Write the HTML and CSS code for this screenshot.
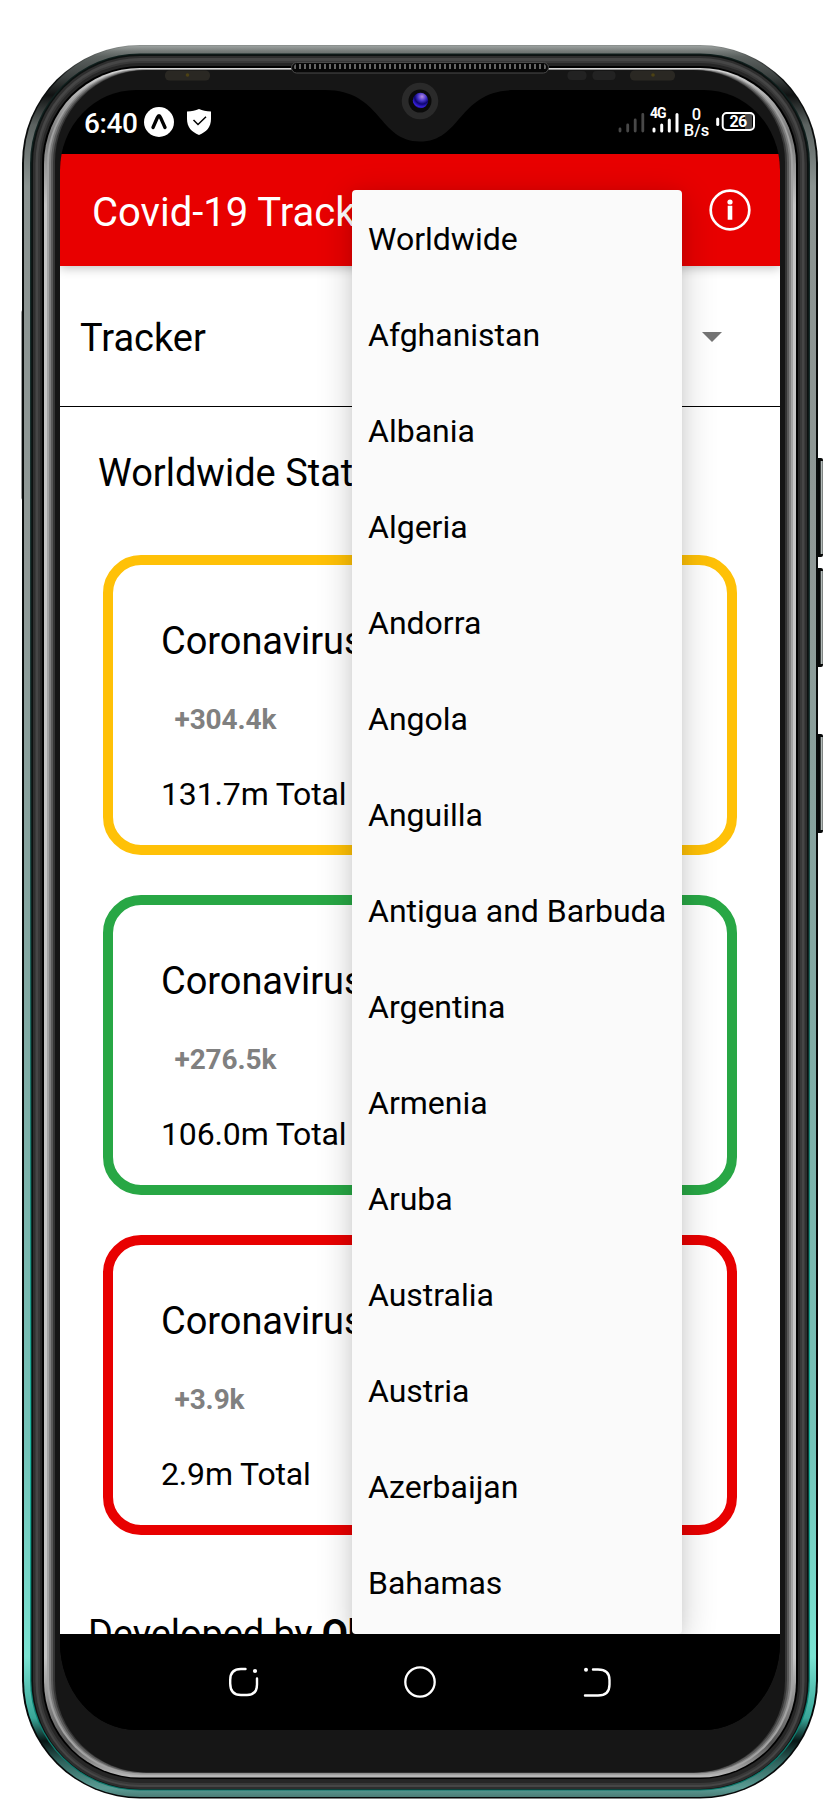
FILE: index.html
```html
<!DOCTYPE html>
<html lang="en">
<head>
<meta charset="utf-8">
<title>Covid-19 Tracker</title>
<link rel="stylesheet" href="styles.css">
</head>
<body>
<div class="phone">
  <svg class="frame" width="840" height="1820" viewBox="0 0 840 1820">
    <defs>
      <linearGradient id="edge" x1="0" y1="0" x2="0" y2="1">
        <stop offset="0" stop-color="#8f9492"/><stop offset=".006" stop-color="#555a58"/><stop offset=".02" stop-color="#0a0c0c"/><stop offset="1" stop-color="#050808"/>
      </linearGradient>
      <linearGradient id="metal" gradientUnits="userSpaceOnUse" x1="0" y1="46" x2="0" y2="1797">
        <stop offset="0" stop-color="#9aa09e"/><stop offset=".003" stop-color="#757a78"/><stop offset=".006" stop-color="#5c6260"/><stop offset=".018" stop-color="#3a3f3e"/><stop offset=".028" stop-color="#101212"/><stop offset=".045" stop-color="#5b6260"/><stop offset=".08" stop-color="#8b9391"/><stop offset=".3" stop-color="#909997"/><stop offset=".55" stop-color="#82aaa4"/><stop offset=".8" stop-color="#74c4b9"/><stop offset=".92" stop-color="#7ae3d2"/><stop offset=".955" stop-color="#38a597"/><stop offset=".968" stop-color="#081716"/><stop offset=".98" stop-color="#2f635d"/><stop offset=".995" stop-color="#5a9c94"/><stop offset="1" stop-color="#4a7c76"/>
      </linearGradient>
      <linearGradient id="tint" x1="0" y1="0" x2="0" y2="1">
        <stop offset="0" stop-color="#10201e"/><stop offset=".4" stop-color="#1d3a37"/><stop offset=".8" stop-color="#18b8a2"/><stop offset="1" stop-color="#0b7468"/>
      </linearGradient>
      <linearGradient id="shine" x1="0" y1="0" x2="0" y2="1">
        <stop offset="0" stop-color="#d5d5d5"/><stop offset=".04" stop-color="#777"/><stop offset=".08" stop-color="#c4c4c4"/><stop offset=".93" stop-color="#c4c4c4"/><stop offset=".98" stop-color="#555"/><stop offset="1" stop-color="#bbb"/>
      </linearGradient>
      <radialGradient id="lens" cx=".6" cy=".25" r=".8">
        <stop offset="0" stop-color="#b58be0"/><stop offset=".35" stop-color="#4432c8"/><stop offset=".6" stop-color="#0d0570"/><stop offset=".85" stop-color="#3a22e0"/><stop offset="1" stop-color="#100830"/>
      </radialGradient>
      <pattern id="mesh" width="5" height="8" patternUnits="userSpaceOnUse" x="294" y="63">
        <rect width="5" height="8" fill="#050505"/><rect x="0" width="2" height="6" fill="#666"/>
      </pattern>
    </defs>
    <!-- side buttons -->
    <g fill="#070909">
      <rect x="814" y="458" width="9" height="99" rx="2"/><rect x="814" y="568" width="9" height="99" rx="2"/><rect x="814" y="734" width="9" height="99" rx="2"/>
      <rect x="21.3" y="310" width="4" height="190" rx="2" fill="#777"/>
    </g>
    <g fill="#b4bcba">
      <rect x="820.7" y="461" width="2" height="93"/><rect x="820.7" y="571" width="2" height="93"/><rect x="820.7" y="737" width="2" height="93"/>
    </g>
    <!-- metal body, outside in -->
    <rect x="22" y="45" width="796" height="1753.5" rx="118" fill="url(#edge)"/>
    <rect x="24" y="46" width="792" height="1751" rx="116" fill="url(#metal)"/>
    <rect x="30" y="53.5" width="780" height="1737" rx="110" fill="url(#tint)"/>
    <rect x="31.3" y="54.5" width="777.4" height="1735" rx="109" fill="#0c1110"/>
    <rect x="33" y="56" width="774" height="1733" rx="107" fill="#2e2e2e"/>
    <rect x="35.5" y="58" width="769" height="1729" rx="105" fill="#464646"/>
    <rect x="38" y="61" width="764" height="1724" rx="102" fill="#383838"/>
    <rect x="40" y="63" width="760" height="1720" rx="100" fill="#262626"/>
    <rect x="42" y="66" width="756" height="1713" rx="98" fill="#000"/>
    <rect x="44" y="68" width="752" height="1709.5" rx="96" fill="url(#shine)"/>
    <rect x="47" y="69" width="746" height="1706" rx="95" fill="#a2a2a2"/>
    <rect x="49" y="69.5" width="742" height="1704" rx="94" fill="#7e7e7e"/>
    <rect x="51" y="70" width="738" height="1703" rx="93" fill="#5a5a5a"/>
    <rect x="53" y="70" width="734" height="1702.5" rx="93" fill="#363636"/>
    <rect x="55" y="70" width="730" height="1702.5" rx="92" fill="#161616"/>
    <!-- earpiece, sensors, camera ring -->
    <rect x="291.5" y="62.5" width="257" height="10.5" rx="5.2" fill="#080808" stroke="#4b4b4b"/>
    <rect x="294" y="64" width="252" height="6" rx="3" fill="url(#mesh)"/>
    <g fill="#222">
      <rect x="165" y="70.5" width="45" height="10" rx="4.5" fill="#2a2823"/><rect x="630" y="70.5" width="45" height="10" rx="4.5" fill="#2a2823"/>
      <rect x="567.5" y="71" width="19" height="9" rx="4"/><rect x="592.5" y="71" width="23" height="9" rx="4"/>
    </g>
    <circle cx="187.5" cy="75" r="1.8" fill="#4d4214"/><circle cx="653" cy="75" r="1.8" fill="#4d4214"/>
    <circle cx="420" cy="101" r="18.3" fill="#2a2a2a"/><circle cx="420" cy="101" r="11.5" fill="#0a0a0a"/>
  </svg>

  <div class="screen">
    <div class="status">
      <span class="clock">6:40</span>
      <svg class="badge" width="30" height="30" viewBox="0 0 30 30"><circle cx="15" cy="15" r="15" fill="#fff"/><path d="M9 20.500 13.300 10.800Q15 6.800 16.700 10.800L21 20.500" fill="none" stroke="#000" stroke-width="3.400" stroke-linecap="round"/></svg>
      <svg class="shield" width="24" height="26" viewBox="0 0 24 26"><path d="M12 0C15.500 1.600 19 2.300 24 2.500V10C24 18 19.500 23 12 26 4.500 23 0 18 0 10V2.500C5 2.300 8.500 1.600 12 0Z" fill="#fff"/><path d="M6.500 11 11 15.500 19 7.700" fill="none" stroke="#000" stroke-width="1.500"/></svg>
      <svg class="indicators" width="140" height="34" viewBox="0 0 140 34">
        <g stroke-width="2.800" stroke-linecap="round" stroke="#484848"><path d="M2 23v2M9.700 19v6M17.200 14v11M24.800 8.500v16.500"/></g>
        <g stroke-width="3" stroke-linecap="round" stroke="#fff"><path d="M36 23v2M43.700 19v6M51.300 14v11M59 8.500v16.500"/></g>
        <text x="32" y="11.5" class="net">4G</text>
        <text x="78.500" y="14" class="rate">0</text>
        <text x="78.500" y="30" class="rate">B/s</text>
        <path d="M99.700 13v5.500" stroke="#fff" stroke-width="3" stroke-linecap="round"/>
        <rect x="127" y="8" width="7" height="15" fill="#484848"/>
        <rect x="104.700" y="7" width="31.300" height="17" rx="4" fill="none" stroke="#fff" stroke-width="2"/>
        <text x="120" y="21.400" class="level">26</text>
      </svg>
    </div>

    <header class="appbar">
      <h1>Covid-19 Tracker</h1>
      <svg width="42" height="42" viewBox="0 0 42 42"><circle cx="21" cy="21" r="19.300" fill="none" stroke="#fff" stroke-width="2.700"/><circle cx="21" cy="13" r="2.600" fill="#fff"/><path d="M18.700 16.800h4.600v14h-4.600z" fill="#fff"/></svg>
    </header>

    <main class="content">
      <div class="picker">
        <span>Tracker</span>
        <svg width="20" height="10" viewBox="0 0 20 10"><path d="M0 0h20L10 10z" fill="#757575"/></svg>
      </div>
      <h2>Worldwide Stats</h2>
      <div class="cards">
        <section class="card cases"><h3>Coronavirus</h3><b>+304.4k</b><p>131.7m Total</p></section>
        <section class="card recovered"><h3>Coronavirus</h3><b>+276.5k</b><p>106.0m Total</p></section>
        <section class="card deaths"><h3>Coronavirus</h3><b>+3.9k</b><p>2.9m Total</p></section>
      </div>
      <footer>Developed by <strong>Ob</strong></footer>
    </main>

    <nav class="navbar">
      <svg width="32" height="32" viewBox="0 0 32 32"><path d="M17.500 3H13C5.500 3 2.200 6.500 2.200 14v3.500c0 8 3.300 11.500 10.800 11.500h6c7 0 10-3.500 10-10.500v-6" fill="none" stroke="#fff" stroke-width="2.400" stroke-linecap="round"/><circle cx="27" cy="5" r="2.100" fill="#fff"/></svg>
      <svg width="32" height="32" viewBox="0 0 32 32"><circle cx="16" cy="16" r="14.700" fill="none" stroke="#fff" stroke-width="2.300"/></svg>
      <svg width="32" height="32" viewBox="0 0 32 32"><path d="M13 3.500h5C25.500 3.500 29.500 7 29.500 14v4.500c0 7.500-3.500 11-11.500 11H5" fill="none" stroke="#fff" stroke-width="2.400" stroke-linecap="round"/><circle cx="6" cy="3.700" r="2" fill="#fff"/></svg>
    </nav>

    <div class="menu-layer">
      <ul class="menu">
        <li>Worldwide</li><li>Afghanistan</li><li>Albania</li><li>Algeria</li><li>Andorra</li><li>Angola</li><li>Anguilla</li><li>Antigua and Barbuda</li><li>Argentina</li><li>Armenia</li><li>Aruba</li><li>Australia</li><li>Austria</li><li>Azerbaijan</li><li>Bahamas</li>
      </ul>
    </div>

    <svg class="notch" width="190" height="52" viewBox="0 0 190 52">
      <path d="M0 0C57 0 53 51.500 95 51.500S133 0 190 0z" fill="#161616"/>
      <circle cx="95" cy="11" r="18.300" fill="#2a2a2a"/><circle cx="95" cy="11" r="11.500" fill="#0a0a0a"/><circle cx="95.500" cy="10.500" r="7.700" fill="url(#lens)"/>
    </svg>
  </div>
</div>
</body>
</html>
```
FILE: styles.css
```css
* { box-sizing: border-box; }
body { margin: 0; background: #fff; font-family: Roboto, "Liberation Sans", sans-serif; color: #000; }
h1, h2, h3, p, ul { margin: 0; padding: 0; font-weight: 400; list-style: none; }
svg { display: block; flex: none; }

.phone { display: grid; width: 840px; height: 1820px; }
.frame { grid-area: 1 / 1; }
.screen {
  grid-area: 1 / 1;
  position: relative;
  display: flex;
  flex-direction: column;
  margin: 90px 60px;
  height: 1640px;
  overflow: hidden;
  background: #000;
  border-radius: 76px 76px 76px 76px / 80px 80px 88px 88px;
}

.status { display: flex; height: 64px; padding: 0 22px 0 24px; color: #fff; }
.clock { width: 60px; padding-top: 17px; font-size: 28px; font-weight: 500; line-height: 33px; letter-spacing: -0.4px; }
.badge { margin-top: 17px; }
.shield { margin: 19px 0 0 13px; }
.indicators { margin: 16px 0 0 auto; fill: #fff; }
.net { font-size: 14px; font-weight: 700; letter-spacing: -1px; }
.rate { font-size: 16.5px; font-weight: 500; text-anchor: middle; }
.level { font-size: 16px; font-weight: 700; text-anchor: middle; letter-spacing: -0.8px; }

.appbar {
  position: relative;
  display: flex;
  align-items: center;
  justify-content: space-between;
  height: 112px;
  padding: 0 29px 0 32px;
  background: #e80000;
  color: #fff;
  box-shadow: 0 2px 10px rgba(0, 0, 0, 0.25);
}
.appbar h1 { padding-top: 6px; font-size: 40px; line-height: 48px; }

.content { height: 1368px; overflow: hidden; background: #fff; }
.picker { display: flex; align-items: center; justify-content: space-between; height: 141px; padding: 0 58px 0 20px; border-bottom: 1px solid #000; font-size: 38px; }
.picker span { padding-top: 3px; }
.picker svg { margin-top: 2px; }
h2 { padding: 41px 0 0 38px; height: 148px; font-size: 38px; line-height: 50px; }
.cards { display: flex; flex-direction: column; gap: 40px; padding: 0 43px; }
.card { height: 300px; padding: 51px 48px 0; border: 10px solid; border-radius: 38px; }
.card h3 { font-size: 38px; line-height: 50px; letter-spacing: -0.05px; }
.card b { display: block; margin-top: 38px; padding-left: 13.5px; font-size: 28px; line-height: 32px; letter-spacing: -0.1px; color: #808080; }
.card p { margin-top: 39px; font-size: 32px; line-height: 38px; letter-spacing: -0.15px; }
.cases { border-color: #ffc107; }
.recovered { border-color: #28a745; }
.deaths { border-color: #e80000; }
footer { padding: 74px 0 0 28px; font-size: 38px; line-height: 50px; letter-spacing: -0.1px; }

.navbar { display: flex; justify-content: center; gap: 144px; height: 96px; padding-top: 32px; background: #000; }

/* dropdown over the page */
.menu-layer { position: absolute; top: 64px; left: 0; width: 720px; height: 1480px; overflow: hidden; }
.menu { width: 330px; height: 1444px; margin: 36px 0 0 292px; background: #fafafa; border-radius: 4px; box-shadow: 0 8px 36px rgba(0, 0, 0, 0.2), 0 2px 14px rgba(0, 0, 0, 0.06); }
.menu li { height: 96px; padding: 1px 0 0 16px; font-size: 32px; line-height: 96px; white-space: nowrap; }

.notch { position: absolute; top: 0; left: 265px; }
```
